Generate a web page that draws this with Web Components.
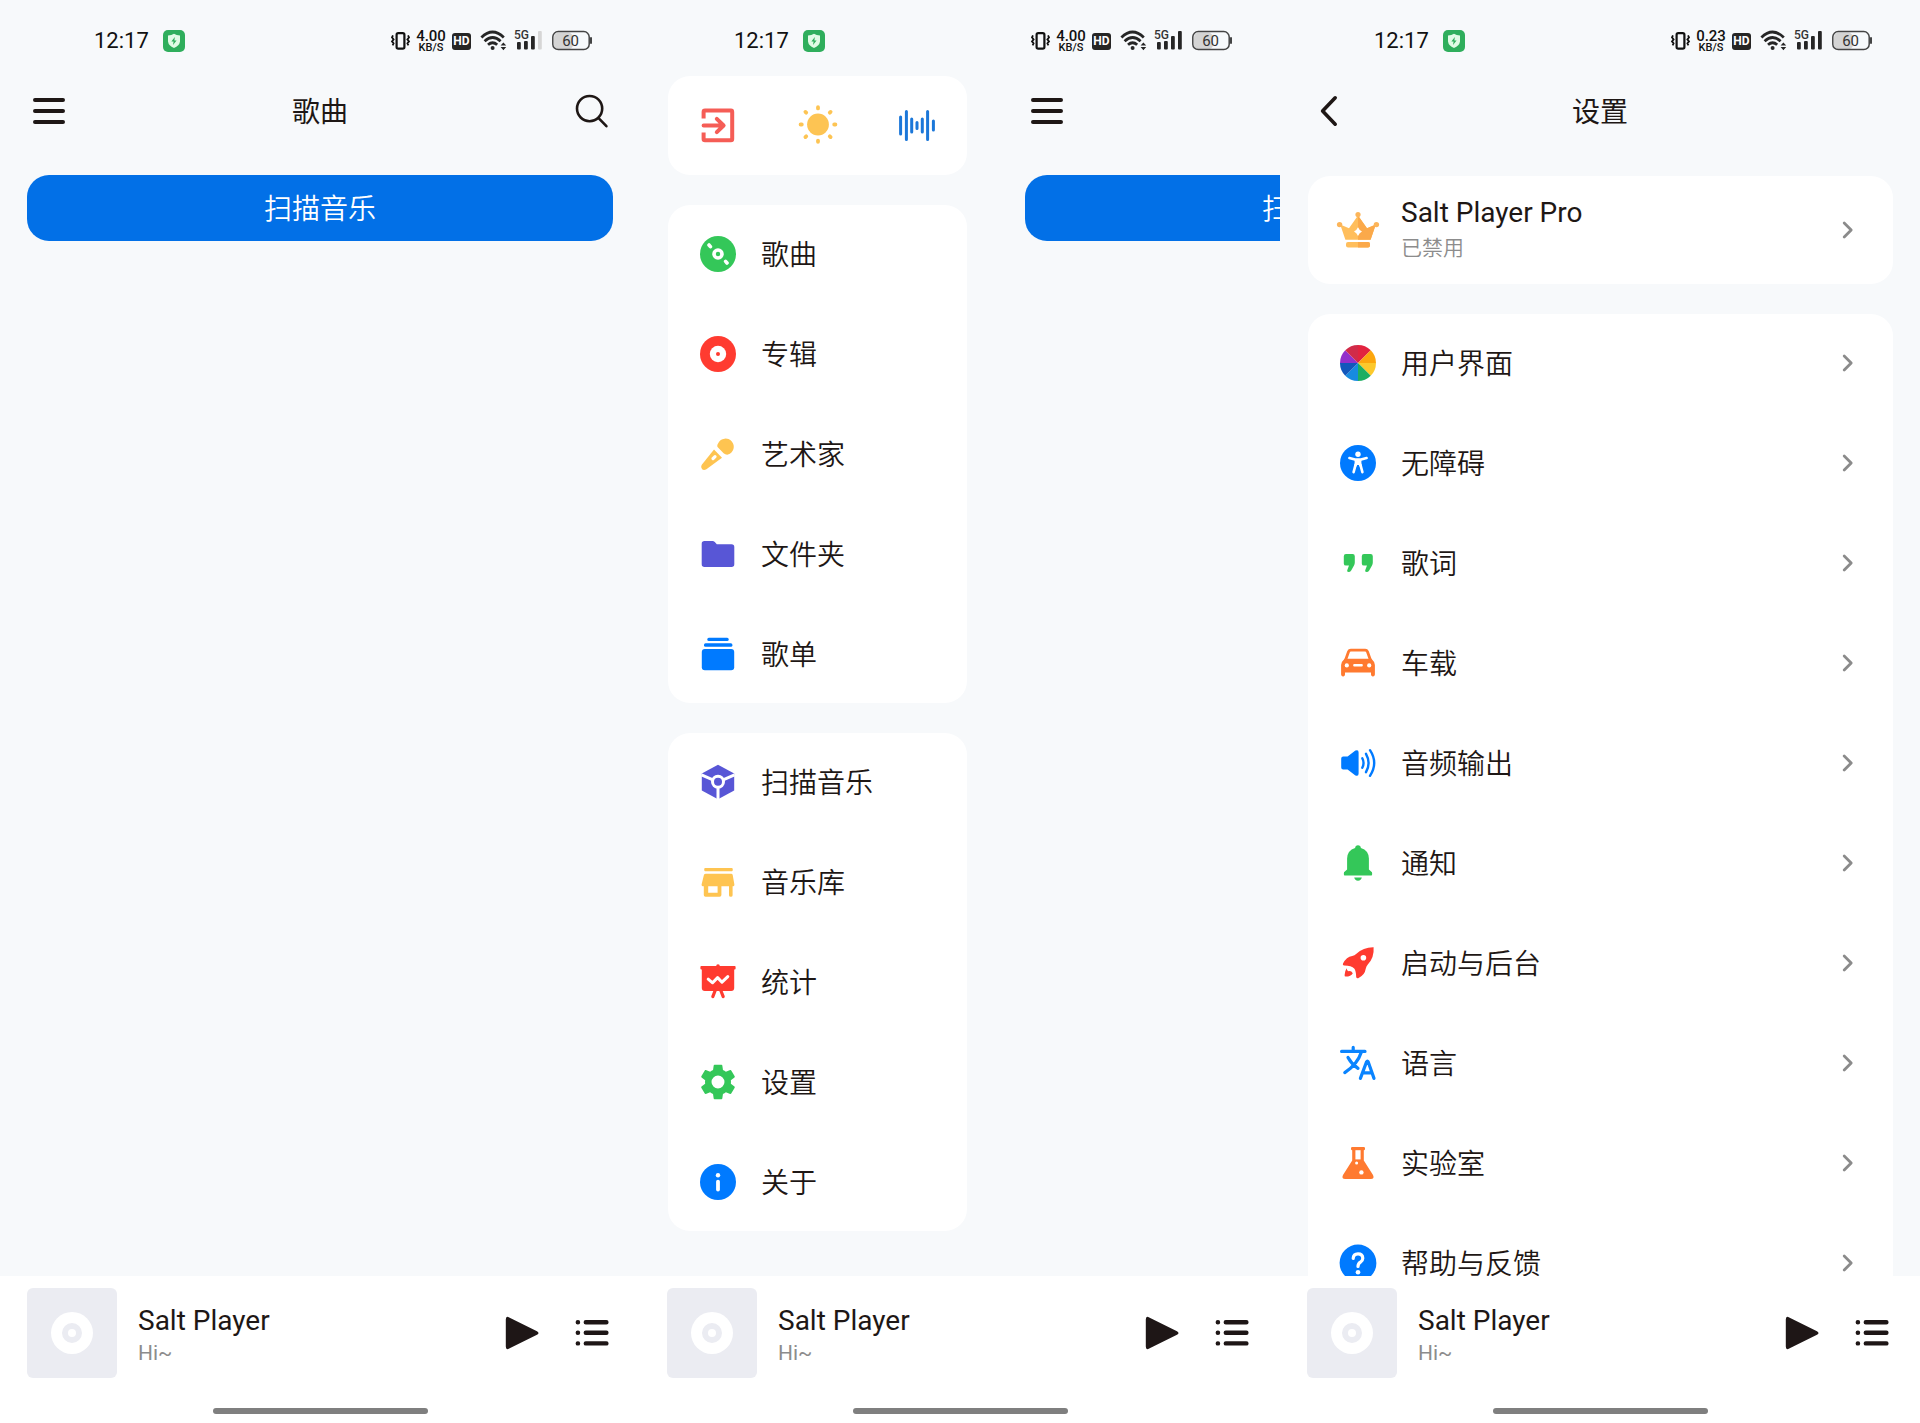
<!DOCTYPE html>
<html lang="zh-CN">
<head>
<meta charset="utf-8">
<title>Salt Player</title>
<style>
  body {
    margin: 0;
    height: 100vh;
    display: grid;
    grid-template-columns: repeat(3, minmax(0, 1fr));
    overflow: hidden;
    background: #f7f9fb;
    color: #1e1715;
    font-family: Roboto, "Noto Sans CJK SC", sans-serif;
    font-size: 28px;
    line-height: 36px;
  }
</style>
</head>
<body>

<phone-screen>
  <status-bar slot="status" speed="4.00" signal="3"></status-bar>
  <songs-page></songs-page>
</phone-screen>

<phone-screen>
  <status-bar slot="status" speed="4.00" signal="4"></status-bar>
  <side-drawer>
    <menu-card>
      <menu-row icon="song">歌曲</menu-row>
      <menu-row icon="album">专辑</menu-row>
      <menu-row icon="mic">艺术家</menu-row>
      <menu-row icon="folder">文件夹</menu-row>
      <menu-row icon="playlist">歌单</menu-row>
    </menu-card>
    <menu-card>
      <menu-row icon="scan">扫描音乐</menu-row>
      <menu-row icon="store">音乐库</menu-row>
      <menu-row icon="stats">统计</menu-row>
      <menu-row icon="gear">设置</menu-row>
      <menu-row icon="info">关于</menu-row>
    </menu-card>
  </side-drawer>
  <songs-page></songs-page>
</phone-screen>

<phone-screen>
  <status-bar slot="status" speed="0.23" signal="4"></status-bar>
  <settings-page>
    <menu-card>
      <menu-row icon="crown" arrow note="已禁用">Salt Player Pro</menu-row>
    </menu-card>
    <menu-card>
      <menu-row icon="palette" arrow>用户界面</menu-row>
      <menu-row icon="access" arrow>无障碍</menu-row>
      <menu-row icon="lyrics" arrow>歌词</menu-row>
      <menu-row icon="car" arrow>车载</menu-row>
      <menu-row icon="speaker" arrow>音频输出</menu-row>
      <menu-row icon="bell" arrow>通知</menu-row>
      <menu-row icon="rocket" arrow>启动与后台</menu-row>
      <menu-row icon="language" arrow>语言</menu-row>
      <menu-row icon="flask" arrow>实验室</menu-row>
      <menu-row icon="help" arrow>帮助与反馈</menu-row>
    </menu-card>
  </settings-page>
</phone-screen>

<script>
// every icon is drawn in a 36 x 36 box
const ICONS = {
  song: `<circle cx="18" cy="18" r="18" fill="#34c759"/>
    <circle cx="18" cy="18" r="4" fill="none" stroke="#fff" stroke-width="3.6"/>
    <path d="M9 9l1.4 1.6M25.6 25.4l1.4 1.6" stroke="#fff" stroke-width="3.6" stroke-linecap="round"/>`,
  album: `<circle cx="18" cy="18" r="18" fill="#ff3b30"/>
    <circle cx="18" cy="18" r="8.2" fill="#fff"/><circle cx="18" cy="18" r="2" fill="#ff3b30"/>`,
  mic: `<g fill="#fec451"><path d="M18.2 7.2A8.2 8.2 0 1 1 28 18.6Q25.6 19 23.6 17.2L18 11.6Q16.4 9.8 18.2 7.2z"/>
    <path d="M14 13.6L22 21.8L6.4 33.2Q4 34.8 2.1 33.3Q.3 31.3 1.6 29z"/></g>
    <path d="M13 22.6l2-2" stroke="#fff" stroke-width="3.2" stroke-linecap="round"/>`,
  folder: `<path d="M4.5 5H12.4Q13.8 5 14.8 6L16.8 8.3H31.5Q34.3 8.3 34.3 11V28.3Q34.3 31 31.5 31H4.5Q1.7 31 1.7 28.3V7.7Q1.7 5 4.5 5z" fill="#5856d6"/>`,
  playlist: `<g fill="#007aff"><rect x="7.3" y="1.7" width="21.4" height="3.4" rx="1.5"/>
    <rect x="4" y="7.3" width="28.4" height="3.4" rx="1.5"/><rect x="1.8" y="13" width="32.4" height="21.2" rx="3"/></g>`,
  scan: `<path d="M18 .8L34.2 9.5V26.6L18 35.3L1.8 26.6V9.5z" fill="#5856d6"/>
    <path d="M1.5 10.8L18 18L34.5 10.8M18 18V36" fill="none" stroke="#fff" stroke-width="3"/>
    <circle cx="18" cy="17.8" r="5.5" fill="#5856d6" stroke="#fff" stroke-width="3"/>`,
  store: `<path fill="#fec451" fill-rule="evenodd" d="M5 4H32q.8 0 .8 1.6T32 7.3H5q-.8 0-.8-1.7T5 4zM5.8 9.7H31.2Q32.4 9.7 32.7 11L34.4 20.4Q34.5 22.2 33 22.3H32.6V31.2Q32.6 32.8 30.8 32.8T29 31.2V22.3H21.4V31Q21.4 32.8 19.6 32.8H5.6Q3.8 32.8 3.8 31V22.3H3Q1.5 22.2 1.6 20.4L3.9 11Q4.3 9.7 5.8 9.7zM8.2 22.3V28.8H17.6V22.3z"/>`,
  stats: `<g fill="#ff3b30"><circle cx="18" cy="2" r="1.8"/><rect x=".4" y="2" width="35.2" height="3.4" rx="1"/>
    <path d="M1.8 3H34.2V24Q34.2 27 31.2 27H4.8Q1.8 27 1.8 24z"/></g>
    <path d="M15.2 26.5L12.8 32.6M20.8 26.5L23.2 32.6" stroke="#ff3b30" stroke-width="3.2" stroke-linecap="round"/>
    <path d="M8.2 15.2L12.6 18.8L17.6 13.6L22 18.2L27.8 12.6" fill="none" stroke="#fff" stroke-width="3" stroke-linecap="round" stroke-linejoin="round"/>`,
  gear: `<path transform="translate(-3.6 -3.6) scale(1.8)" fill="#34c759" d="M19.14 12.94c.04-.3.06-.61.06-.94 0-.32-.02-.64-.07-.94l2.03-1.58a.49.49 0 0 0 .12-.61l-1.92-3.32a.488.488 0 0 0-.59-.22l-2.39.96c-.5-.38-1.03-.7-1.62-.94l-.36-2.54a.484.484 0 0 0-.48-.41h-3.84c-.24 0-.43.17-.47.41l-.36 2.54c-.59.24-1.13.57-1.62.94l-2.39-.96c-.22-.08-.47 0-.59.22L2.74 8.87c-.12.21-.08.47.12.61l2.03 1.58c-.05.3-.09.63-.09.94s.02.64.07.94l-2.03 1.58a.49.49 0 0 0-.12.61l1.92 3.32c.12.22.37.29.59.22l2.39-.96c.5.38 1.03.7 1.62.94l.36 2.54c.05.24.24.41.48.41h3.84c.24 0 .44-.17.47-.41l.36-2.54c.59-.24 1.13-.56 1.62-.94l2.39.96c.22.08.47 0 .59-.22l1.92-3.32c.12-.22.07-.47-.12-.61l-2.01-1.58zM12 15.6A3.6 3.6 0 1 1 12 8.4a3.6 3.6 0 0 1 0 7.2z"/>`,
  info: `<circle cx="18" cy="18" r="18" fill="#007aff"/><circle cx="18" cy="11.3" r="2.2" fill="#fff"/>
    <path d="M18 17.6V25.6" stroke="#fff" stroke-width="3.8" stroke-linecap="round"/>`,
  exit: `<g fill="none" stroke="#f55d56" stroke-width="4" stroke-linecap="round" stroke-linejoin="round">
    <path d="M3.6 11.6V5Q3.6 3.6 5 3.6H31Q32.2 3.6 32.2 5V32Q32.2 33.2 31 33.2H5Q3.6 33.2 3.6 32V25.4" stroke-linecap="butt"/>
    <path d="M3.6 18.5H23M16.8 11.8L23.6 18.5L16.8 25.2"/></g>`,
  sun: `<circle cx="18" cy="17.5" r="10.9" fill="#fdc453"/>
    <path d="M18 .2v1.2M18 33.6v1.2M.6 17.5h1.2M34.2 17.5h1.2M5.4 4.9l.8.8M29.8 29.3l.8.8M30.6 4.9l-.8.8M6.2 29.3l-.8.8" stroke="#fdc453" stroke-width="3.8" stroke-linecap="round"/>`,
  wave: `<path d="M1.6 10V27M7.4 4.6V32.4M12.7 12V25M18 15.4V21.6M23.3 12V25M28.6 4.6V32.4M34.4 14V23" stroke="#1b77d9" stroke-width="3" stroke-linecap="round"/>`,
  crown: `<g fill="#ffbe5c"><path d="M.2 12.4L9 16.2L18 3.6L27 16.2L35.8 12.4L30.6 27.8H5.4z"/>
    <rect x="6" y="30" width="24" height="5.4" rx="2"/></g>
    <path d="M18 3.6L27 16.2L35.8 12.4L30.6 27.8H18zM18 30H28q2 0 2 2v1.4q0 2-2 2H18z" fill="#fba94a"/>
    <g fill="#fcb55a"><circle cx="18" cy="2.6" r="2.6"/><circle cx="-.4" cy="12.6" r="2.7"/><circle cx="36.4" cy="12.6" r="2.7"/></g>
    <path d="M18 15.2Q19.4 18.4 22 19.6Q19.4 20.8 18 24Q16.6 20.8 14 19.6Q16.6 18.4 18 15.2z" fill="#fff"/>`,
  palette: `<path d="M18 18V0A18 18 0 0 1 30.73 5.27z" fill="#e2233f"/><path d="M18 18L30.73 5.27A18 18 0 0 1 36 18z" fill="#fca60d"/>
    <path d="M18 18H36A18 18 0 0 1 30.73 30.73z" fill="#fcc92c"/><path d="M18 18L30.73 30.73A18 18 0 0 1 18 36z" fill="#1dae62"/>
    <path d="M18 18V36A18 18 0 0 1 5.27 30.73z" fill="#178be0"/><path d="M18 18L5.27 30.73A18 18 0 0 1 0 18z" fill="#1257bb"/>
    <path d="M18 18H0A18 18 0 0 1 5.27 5.27z" fill="#9330cb"/><path d="M18 18L5.27 5.27A18 18 0 0 1 18 0z" fill="#d12b49"/>`,
  access: `<circle cx="18" cy="18" r="18" fill="#007aff"/><circle cx="18" cy="9.2" r="2.7" fill="#fff"/>
    <path d="M9.4 13.1L15 14.6H21L26.6 13.1M15.6 19.6L13.6 27.2M20.4 19.6L22.4 27.2" fill="none" stroke="#fff" stroke-width="2.6" stroke-linecap="round" stroke-linejoin="round"/>
    <path d="M14.6 14.2H21.4V19L22 21.6H19.6L18.8 20H17.2L16.4 21.6H14L14.6 19z" fill="#fff"/>`,
  lyrics: `<path id="q" d="M6 9H12.6Q14.8 9 14.8 11.2V17.4Q14.8 19 14 20.4L11.2 25.4Q10.2 27 8.6 27Q6.6 27 7.4 24.8L9 20.6H6Q3.8 20.6 3.8 18.4V11.2Q3.8 9 6 9z" fill="#34c759"/>
    <use href="#q" x="18"/>`,
  car: `<path d="M5.4 15.5L8.6 6.6Q9.2 5.2 10.8 5.2H25.2Q26.8 5.2 27.4 6.6L30.6 15.5" fill="none" stroke="#ff7a30" stroke-width="2.8"/>
    <path d="M4.6 13.8H31.4Q34.9 17 34.9 20V29.6Q34.9 31.4 33.2 31.4H32.6Q31 31.4 31 29.6V27.6H5V29.6Q5 31.4 3.4 31.4H2.8Q1.1 31.4 1.1 29.6V20Q1.1 17 4.6 13.8z" fill="#ff7a30"/>
    <circle cx="6.8" cy="20.4" r="2.1" fill="#fff"/><circle cx="29.2" cy="20.4" r="2.1" fill="#fff"/><rect x="13.2" y="19" width="9.6" height="2.4" rx="1" fill="#fff"/>`,
  speaker: `<path d="M3.2 11.6H7.6L15.4 5.6Q18.6 4.2 18.6 7.4V28.6Q18.6 31.8 15.4 30.4L7.6 24.4H3.2Q1.2 24.4 1.2 22.4V13.6Q1.2 11.6 3.2 11.6z" fill="#007aff"/>
    <path d="M22.3 13.2Q24.8 18 22.3 22.8M26 8.8Q31.2 18 26 27.2M30 5.2Q38.4 18 30 30.8" fill="none" stroke="#007aff" stroke-width="2.4" stroke-linecap="round"/>`,
  bell: `<path d="M18 .3Q20.6 .3 20.9 3Q28.8 5.4 28.9 13.6V24.6L32 27.2Q32.6 30.6 31 30.6H5Q3.4 30.6 4 27.2L7.1 24.6V13.6Q7.2 5.4 15.1 3Q15.4 .3 18 .3zM14.2 32.6H21.8Q21.2 35.7 18 35.7T14.2 32.6z" fill="#34c759"/>`,
  rocket: `<path d="M33.6 2.2Q34.4 12.6 27.8 19.4Q26.4 20.8 25.8 23.6Q24.8 30.4 18.2 33.2Q16.6 33.8 16.2 32Q16 25.4 14.2 23.4Q11.6 20.8 4.2 20.6Q2.2 20.4 3 18.6Q6.4 11.8 12.2 11Q14.6 10.6 16.4 8.8Q23.4 2 33.6 2.2z" fill="#ff3b30"/>
    <circle cx="23.4" cy="12.8" r="2.8" fill="#fff"/>
    <path d="M6.8 23.2Q6.6 25.6 8.6 26.2Q11 25.2 12.8 28.2Q11 31.6 5.6 31.6Q4.4 31.6 4.6 30Q4.6 26 6.8 23.2z" fill="#ff3b30"/>`,
  language: `<path d="M1.6 6.4H25M13.2 2.4V6.4M21.4 7Q17.4 19.4 4.8 27.6M8 12.4Q11.6 19 18 23.4M20.4 33.4L26.6 16.8Q27.4 15.4 28.2 16.8L34 33.4M23 27.8H31.6" fill="none" stroke="#0a84ff" stroke-width="3.2" stroke-linecap="round"/>`,
  flask: `<rect x="11" y="2" width="14" height="3.2" rx="1.2" fill="#ff7a30"/>
    <path d="M12.2 4H23.8V15.4L33 30Q34.8 34 30.8 34H5.2Q1.2 34 3 30L12.2 15.4z" fill="#ff7a30"/>
    <path d="M15.4 5.2H20.6V14.4H15.4z" fill="#fff"/><circle cx="16.6" cy="18" r="1.5" fill="#fff"/><circle cx="21.4" cy="27.4" r="2.2" fill="#fff"/>`,
  help: `<circle cx="18" cy="18" r="18.4" fill="#007aff"/><circle cx="18" cy="27.2" r="2.3" fill="#fff"/>
    <path d="M13.2 13.4Q13.4 8.8 18 8.8T22.8 13.2Q22.8 15.4 20.4 17.2Q18 18.8 18 21.4" fill="none" stroke="#fff" stroke-width="3.2" stroke-linecap="round"/>`,
  menu: `<path d="M4 7H32M4 18H32M4 29H32" stroke="#1e1715" stroke-width="4" stroke-linecap="round"/>`,
  search: `<g fill="none" stroke="#1e1715" stroke-width="2.6" stroke-linecap="round"><circle cx="16.6" cy="15.6" r="12.6"/><path d="M25.6 25.2L33.4 33.2"/></g>`,
  back: `<path d="M24.2 4.8L11.6 18L24.2 31.2" fill="none" stroke="#1e1715" stroke-width="3.6" stroke-linecap="round" stroke-linejoin="round"/>`,
  play: `<path d="M1.8 4.4Q1.8 .6 5.2 2.4L33 16.2Q36 18 33 19.8L5.2 33.6Q1.8 35.4 1.8 31.6z" fill="#1e1616"/>`,
  queue: `<path d="M11.8 7.2H32.4M11.8 17.8H32.4M11.8 28.4H32.4M3.8 7.2h.2M3.8 17.8h.2M3.8 28.4h.2" stroke="#1e1616" stroke-width="4.4" stroke-linecap="round"/>`,
  chevron: `<path d="M14.2 11L21.2 18L14.2 25" fill="none" stroke="#8b8b8b" stroke-width="2.8" stroke-linecap="round" stroke-linejoin="round"/>`
};

function render(el, html) {
  const template = document.createElement('template');
  template.innerHTML = html;
  el.attachShadow({ mode: 'open' }).appendChild(template.content.cloneNode(true));
}

class SaltIcon extends HTMLElement {
  connectedCallback() {
    if (this.shadowRoot) return;
    render(this, `
      <style>
        :host { display: block; flex: none; width: 36px; height: 36px; }
        svg { display: block; width: 100%; height: 100%; overflow: visible; }
      </style>
      <svg viewBox="0 0 36 36" aria-hidden="true">${ICONS[this.getAttribute('name')]}</svg>`);
  }
}

// One phone: status bar, clipped content area, player at the bottom
class PhoneScreen extends HTMLElement {
  constructor() {
    super();
    render(this, `
      <style>
        :host { display: flex; flex-direction: column; height: 100vh; min-width: 0; }
        main { flex: 1; min-height: 0; display: flex; overflow: hidden; }
      </style>
      <slot name="status"></slot>
      <main><slot></slot></main>
      <player-bar></player-bar>`);
  }
}

class StatusBar extends HTMLElement {
  connectedCallback() {
    if (this.shadowRoot) return;
    const level = Number(this.getAttribute('signal'));
    const bars = [12, 11, 6, 1].map((top, i) =>
      `<rect x="${4 + i * 7}" y="${top}" width="3.8" height="${19.4 - top}" rx="1" fill="${i < level ? '#262626' : '#d6d6d6'}"/>`);
    render(this, `
      <style>
        :host {
          display: flex; align-items: center; justify-content: space-between;
          box-sizing: border-box; height: 76px; padding: 6px 48px 0 94px;
          color: #111; line-height: 22px;
        }
        div { display: flex; align-items: center; gap: 6px; }
        .clock { gap: 14px; font-size: 22px; }
        svg { display: block; height: 22px; overflow: visible; }
        .speed { display: block; width: 30px; text-align: center; font-size: 15px; line-height: 12px; font-weight: 500; }
        .speed small { display: block; font-size: 11px; line-height: 11px; }
        .hd {
          width: 19px; height: 17px; border-radius: 3px; background: #262626; color: #fff;
          text-align: center; font-size: 12px; line-height: 17px; font-weight: 700;
        }
        text { font-family: Roboto, sans-serif; fill: #333; }
      </style>
      <div class="clock">
        <time>12:17</time>
        <svg width="22" viewBox="0 0 22 22"><rect width="22" height="22" rx="5" fill="#2fae5c"/>
          <path d="M11 3.8Q13.4 5.4 17 5.4V11.6Q16.4 16 11 18Q5.6 16 5 11.6V5.4Q8.6 5.4 11 3.8z" fill="#e2fbe6"/>
          <path d="M11.8 7L8.4 11.6H10.6L10 15L13.6 10.4H11.4z" fill="#2fae5c"/></svg>
      </div>
      <div>
        <svg width="19" viewBox="0 0 19 22"><rect x="5.6" y="3.2" width="7.8" height="15.4" rx="1.6" fill="none" stroke="#111" stroke-width="2.2"/>
          <path d="M2 5.4l-1 2 1.6 2-1.6 2 1.6 2-1 2M17 5.4l1 2-1.6 2 1.6 2-1.6 2 1 2" fill="none" stroke="#111" stroke-width="1.8"/></svg>
        <span class="speed">${this.getAttribute('speed')}<small>KB/S</small></span>
        <span class="hd">HD</span>
        <svg width="30" viewBox="0 0 30 22"><g fill="none" stroke="#262626" stroke-width="2.8">
          <path d="M4.4 7.4Q15.6 -3.4 26.8 7.4M7.6 11.2Q15.6 3.8 23.6 11.2M11 14.8Q15.6 10.8 20.2 14.8"/></g>
          <circle cx="15.6" cy="18" r="2" fill="#262626"/><path d="M23.6 15.6L26.4 12.4L29.2 15.6zM23.6 17L26.4 20.2L29.2 17z" fill="#262626"/></svg>
        <svg width="29" viewBox="0 0 29 22">${bars.join('')}<text x="1" y="9" font-size="12" font-weight="500">5G</text></svg>
        <svg width="44" viewBox="0 0 44 22"><rect x="6" y="2.6" width="19" height="16.8" rx="5" fill="#d4d4d4"/>
          <rect x="4.8" y="1.6" width="36.4" height="18" rx="5.4" fill="none" stroke="#444" stroke-width="1.5"/>
          <rect x="42" y="7" width="2" height="7" rx="1" fill="#444"/><text x="22.6" y="16" font-size="15" text-anchor="middle">60</text></svg>
      </div>`);
  }
}

class TitleBar extends HTMLElement {
  connectedCallback() {
    if (this.shadowRoot) return;
    const left = this.getAttribute('left');
    render(this, `
      <style>
        :host { display: grid; grid-template-columns: 36px 1fr 36px; align-items: center; height: 70px; padding: 0 31px; }
        h1 { margin: 0; padding-top: 4px; font-size: 28px; font-weight: 400; text-align: center; }
        button { padding: 0; border: 0; background: none; }
      </style>
      <button aria-label="${left}"><salt-icon name="${left}"></salt-icon></button>
      <h1><slot></slot></h1>
      ${this.hasAttribute('search') ? '<button aria-label="search"><salt-icon name="search"></salt-icon></button>' : ''}`);
  }
}

class SongsPage extends HTMLElement {
  constructor() {
    super();
    render(this, `
      <style>
        :host { display: block; flex: none; width: 100%; }
        .scan {
          display: block; width: calc(100% - 54px); height: 66px; margin: 29px 27px 0; padding: 4px 0 0;
          border: 0; border-radius: 22px; background: #0270e7; color: #fff; font: inherit; font-weight: 350;
        }
      </style>
      <title-bar left="menu" search>歌曲</title-bar>
      <button class="scan">扫描音乐</button>`);
  }
}

class SideDrawer extends HTMLElement {
  constructor() {
    super();
    render(this, `
      <style>
        :host { display: flex; flex-direction: column; gap: 30px; flex: none; width: 299px; padding: 0 31px 0 28px; }
        .tools { display: flex; align-items: center; justify-content: space-between; height: 97px; padding: 0 32px 2px; }
        button { padding: 0; border: 0; background: none; }
      </style>
      <menu-card>
        <div class="tools">
          <button aria-label="退出"><salt-icon name="exit"></salt-icon></button>
          <button aria-label="主题"><salt-icon name="sun"></salt-icon></button>
          <button aria-label="均衡器"><salt-icon name="wave"></salt-icon></button>
        </div>
      </menu-card>
      <slot></slot>`);
  }
}

class SettingsPage extends HTMLElement {
  constructor() {
    super();
    render(this, `
      <style>
        :host { display: block; flex: none; width: 100%; }
        .list { display: flex; flex-direction: column; gap: 30px; margin: 30px 27px 0 28px; }
      </style>
      <title-bar left="back">设置</title-bar>
      <div class="list"><slot></slot></div>`);
  }
}

class MenuCard extends HTMLElement {
  constructor() {
    super();
    render(this, `
      <style>
        :host { display: flex; flex-direction: column; gap: 2px; border-radius: 22px; background: #fff; }
      </style>
      <slot></slot>`);
  }
}

class MenuRow extends HTMLElement {
  connectedCallback() {
    if (this.shadowRoot) return;
    const note = this.getAttribute('note');
    render(this, `
      <style>
        :host { display: block; }
        a {
          display: flex; align-items: center; gap: 25px; height: 98px; padding: 0 27px 0 32px;
          color: inherit; text-decoration: none;
        }
        .label { flex: 1; padding-top: 4px; font-weight: 350; }
        .tall { height: 108px; }
        .tall .label { padding-top: 0; font-weight: 400; }
        small { display: block; font-size: 21px; line-height: 34px; font-weight: 350; color: #8c8c8c; }
      </style>
      <a href="#" class="${note ? 'tall' : ''}">
        <salt-icon name="${this.getAttribute('icon')}"></salt-icon>
        <span class="label"><slot></slot>${note ? `<small>${note}</small>` : ''}</span>
        ${this.hasAttribute('arrow') ? '<salt-icon name="chevron"></salt-icon>' : ''}
      </a>`);
  }
}

class PlayerBar extends HTMLElement {
  constructor() {
    super();
    render(this, `
      <style>
        :host { display: block; background: #fff; }
        .bar { display: flex; align-items: center; padding: 12px 30px 0 27px; }
        .cover { display: block; width: 90px; height: 90px; border-radius: 6px; background: #ebecf2; }
        .song { flex: 1; margin-left: 21px; padding-top: 2px; line-height: 38px; }
        small { display: block; font-size: 21px; line-height: 26px; color: #8c8c8c; }
        button { padding: 0; border: 0; background: none; }
        .controls { display: flex; gap: 34px; }
        .home { width: 215px; height: 6px; margin: 30px auto 9px; border-radius: 3px; background: #7f7f7f; }
      </style>
      <div class="bar">
        <svg class="cover" viewBox="0 0 90 90"><circle cx="45" cy="45" r="21" fill="#fff"/>
          <circle cx="45" cy="45" r="7" fill="none" stroke="#ebecf2" stroke-width="6"/></svg>
        <div class="song">Salt Player<small>Hi~</small></div>
        <div class="controls">
          <button aria-label="播放"><salt-icon name="play"></salt-icon></button>
          <button aria-label="播放队列"><salt-icon name="queue"></salt-icon></button>
        </div>
      </div>
      <div class="home"></div>`);
  }
}

customElements.define('salt-icon', SaltIcon);
customElements.define('title-bar', TitleBar);
customElements.define('status-bar', StatusBar);
customElements.define('player-bar', PlayerBar);
customElements.define('menu-card', MenuCard);
customElements.define('menu-row', MenuRow);
customElements.define('songs-page', SongsPage);
customElements.define('side-drawer', SideDrawer);
customElements.define('settings-page', SettingsPage);
customElements.define('phone-screen', PhoneScreen);
</script>
</body>
</html>
